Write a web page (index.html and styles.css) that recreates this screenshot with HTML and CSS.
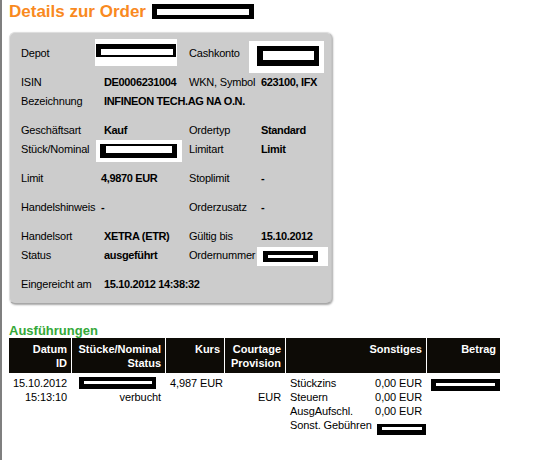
FILE: index.html
```html
<!DOCTYPE html>
<html>
<head>
<meta charset="utf-8">
<link rel="stylesheet" href="styles.css">
</head>
<body>
<div class="frame">
  <h1 class="title">Details zur Order<span class="redact r-title"></span></h1>

  <div class="panel">
    <div class="group">
      <div class="lbl">Depot</div>
      <div class="val"><span class="wbox w-depot"><span class="redact r-depot"></span></span></div>
      <div class="lbl">Cashkonto</div>
      <div class="val"><span class="wbox w-cash"><span class="redact r-cash"></span></span></div>
    </div>

    <div class="group">
      <div class="lbl">ISIN</div>
      <div class="val">DE0006231004</div>
      <div class="lbl">WKN, Symbol</div>
      <div class="val">623100, IFX</div>
      <div class="lbl">Bezeichnung</div>
      <div class="val span3">INFINEON TECH.AG NA O.N.</div>
    </div>

    <div class="group">
      <div class="lbl">Geschäftsart</div>
      <div class="val">Kauf</div>
      <div class="lbl">Ordertyp</div>
      <div class="val">Standard</div>
      <div class="lbl">Stück/Nominal</div>
      <div class="val"><span class="wbox w-stueck"><span class="redact r-stueck"></span></span></div>
      <div class="lbl">Limitart</div>
      <div class="val">Limit</div>
    </div>

    <div class="group narrow">
      <div class="lbl">Limit</div>
      <div class="val">4,9870 EUR</div>
      <div class="lbl">Stoplimit</div>
      <div class="val">-</div>
    </div>

    <div class="group narrow">
      <div class="lbl">Handelshinweis</div>
      <div class="val">-</div>
      <div class="lbl">Orderzusatz</div>
      <div class="val">-</div>
    </div>

    <div class="group">
      <div class="lbl">Handelsort</div>
      <div class="val">XETRA (ETR)</div>
      <div class="lbl">Gültig bis</div>
      <div class="val">15.10.2012</div>
      <div class="lbl">Status</div>
      <div class="val">ausgeführt</div>
      <div class="lbl">Ordernummer</div>
      <div class="val"><span class="wbox w-order"><span class="redact r-order"></span></span></div>
    </div>

    <div class="group">
      <div class="lbl">Eingereicht am</div>
      <div class="val span3">15.10.2012 14:38:32</div>
    </div>
  </div>

  <h2 class="subtitle">Ausführungen</h2>

  <div class="exec">
    <div class="th">Datum<br>ID</div>
    <div class="th">Stücke/Nominal<br>Status</div>
    <div class="th">Kurs</div>
    <div class="th">Courtage<br>Provision</div>
    <div class="th">Sonstiges</div>
    <div class="th">Betrag</div>

    <div class="td">15.10.2012<br>15:13:10</div>
    <div class="td"><span class="redact r-stk"></span>verbucht</div>
    <div class="td">4,987 EUR</div>
    <div class="td">&nbsp;<br>EUR</div>
    <div class="td td-misc">
      <div class="misc-row"><span>Stückzins</span><span>0,00 EUR</span></div>
      <div class="misc-row"><span>Steuern</span><span>0,00 EUR</span></div>
      <div class="misc-row"><span>AusgAufschl.</span><span>0,00 EUR</span></div>
      <div class="misc-row"><span>Sonst. Gebühren</span><span class="redact r-sonst"></span></div>
    </div>
    <div class="td"><span class="redact r-betrag"></span></div>
  </div>
</div>
</body>
</html>
```

FILE: styles.css
```css
html, body {
  margin: 0;
  padding: 0;
  background: #ffffff;
}

body {
  font-family: "Liberation Sans", Arial, sans-serif;
  font-size: 11px;
  color: #000000;
}

.frame {
  box-sizing: border-box;
  min-height: 460px;
  border-left: 2px solid #7f7f7f;
  padding-left: 7px;
  padding-top: 2px;
}

.title {
  margin: 0;
  font-size: 17px;
  line-height: 20px;
  font-weight: bold;
  color: #f98a1f;
}

.redact {
  display: inline-block;
  box-sizing: border-box;
  background: #ffffff;
  border-style: solid;
  border-color: #000000;
}

.r-title {
  vertical-align: top;
  margin-top: 2px;
  margin-left: 6px;
  width: 102px;
  height: 15px;
  border-width: 5px 5px 4px 5px;
}

/* Panel */
.panel {
  box-sizing: border-box;
  width: 323px;
  margin-top: 10px;
  padding: 11px 0 9px 11px;
  background: #cccccc;
  border: 1px solid #dedede;
  border-bottom-color: #a8a8a8;
  border-right-color: #c4c4c4;
  border-radius: 6px;
  box-shadow: 1px 1px 2px rgba(0, 0, 0, 0.35);
  letter-spacing: -0.2px;
}

.group {
  display: grid;
  grid-template-columns: 83px 85px 72px 1fr;
  grid-auto-rows: 19px;
  align-items: center;
  line-height: 19px;
}

.group + .group {
  margin-top: 10px;
}

.group.narrow {
  grid-template-columns: 80px 88px 72px 1fr;
}

.lbl {
  white-space: nowrap;
}

.val {
  font-weight: bold;
  letter-spacing: -0.35px;
  white-space: nowrap;
  display: flex;
  align-items: center;
  height: 19px;
}

.span3 {
  grid-column: 2 / 5;
}

.wbox {
  display: flex;
  box-sizing: border-box;
  background: #ffffff;
  flex-shrink: 0;
}

.wbox .redact {
  display: block;
}

.w-depot {
  margin-left: -9px;
  width: 82px;
  height: 27px;
  margin-top: -2px;
  padding: 5px 0 0 1px;
}
.r-depot {
  width: 80px;
  height: 13px;
  border-width: 5px 3px 2px 5px;
}

.w-cash {
  margin-left: -12px;
  width: 75px;
  height: 32px;
  margin-top: 6px;
  padding: 5px 0 0 8px;
}
.r-cash {
  width: 62px;
  height: 20px;
  border-width: 5px 5px 6px 6px;
}

.w-stueck {
  margin-left: -8px;
  width: 86px;
  height: 22px;
  margin-top: 3px;
  padding: 4px 0 0 4px;
}
.r-stueck {
  width: 77px;
  height: 14px;
  border-width: 2px 5px 5px 6px;
}

.w-order {
  margin-left: -4px;
  width: 71px;
  height: 19px;
  margin-top: 2px;
  padding: 4px 0 0 6px;
}
.r-order {
  width: 55px;
  height: 11px;
  border-width: 4px 5px 4px 5px;
}

/* Executions */
.subtitle {
  margin: 19px 0 0 0;
  font-size: 13px;
  line-height: 15px;
  font-weight: bold;
  color: #35a838;
}

.exec {
  display: grid;
  grid-template-columns: 62px 94px 59px 61px 141px 74px;
  width: 491px;
}

.th {
  box-sizing: border-box;
  background: #0d0b06;
  color: #ffffff;
  font-weight: bold;
  text-align: right;
  line-height: 14px;
  padding: 4px 4px 3px 4px;
  height: 35px;
  white-space: nowrap;
}

.th + .th {
  border-left: 1px solid #ffffff;
}

.td {
  box-sizing: border-box;
  text-align: right;
  line-height: 14px;
  padding: 3px 4px 0 4px;
  white-space: nowrap;
  letter-spacing: -0.1px;
}

.td + .td {
  border-left: 1px solid transparent;
}

.r-stk {
  display: block;
  width: 77px;
  height: 12px;
  margin: 1px 5px 1px auto;
  border-width: 4px 4px 5px 5px;
}

.r-betrag {
  display: block;
  width: 69px;
  height: 12px;
  margin: 3px -4px 0 auto;
  border-width: 4px 5px 5px 5px;
}

.td-misc {
  text-align: left;
}

.misc-row {
  display: flex;
  justify-content: space-between;
  align-items: flex-start;
}

.r-sonst {
  width: 49px;
  height: 11px;
  margin: 6px -4px 0 0;
  border-width: 3px 4px 5px 5px;
}
```
